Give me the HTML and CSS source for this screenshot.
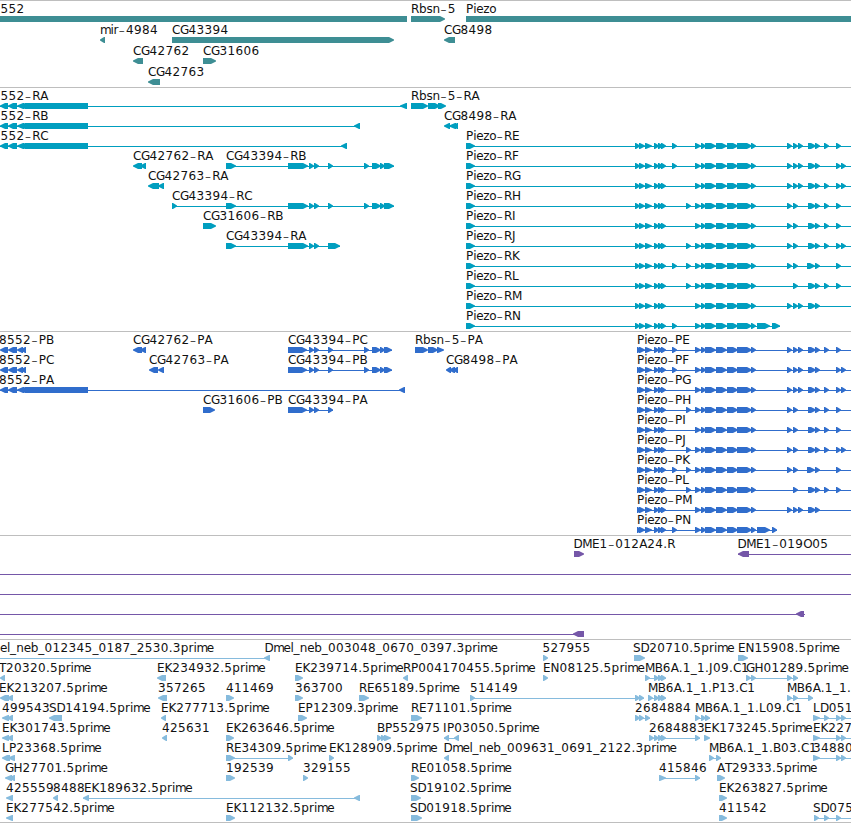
FILE: index.html
```html
<!DOCTYPE html>
<html lang="en">
<head>
<meta charset="utf-8">
<title>Genome tracks</title>
<link rel="stylesheet" href="styles.css">
</head>
<body>
<main class="browser" id="browser"></main>
<script src="tracks.js"></script>
</body>
</html>
```
FILE: styles.css
```css
body {
  margin: 0;
  background: #fff;
}

.browser {
  display: flex;
  flex-direction: column;
  width: 851px;
  height: 823px;
  box-sizing: border-box;
  overflow: hidden;
  border-bottom: 1px solid #bebebe;
}

.track {
  flex: none;
  display: flex;
  flex-direction: column;
  box-sizing: border-box;
  border-top: 1px solid #bebebe;
}

.row {
  display: block;
  flex: none;
  width: 851px;
  height: 20px;
  overflow: visible;
}

.row text {
  font-family: "DejaVu Sans", sans-serif;
  font-size: 12px;
  fill: #111;
  white-space: pre;
}

.row .dash {
  font-family: "DejaVu Sans Light", "DejaVu Sans", sans-serif;
  font-weight: 200;
  font-size: 18px;
}

.genes { height: 87px; color: #3e8e94; }
.genes .row { height: 21px; }
.transcripts { height: 244px; color: #009ebf; }
.proteins { height: 204px; color: #306dcc; }
.clones { height: 104px; color: #7557a8; }
.ests { height: 183px; color: #86bbdd; }

.line, .block { fill: currentColor; }
.line { shape-rendering: crispEdges; }
```
FILE: tracks.js
```js
// Glyph advances for 12px labels.
const ADV = { C: 8, G: 8.5, D: 8.7, R: 8, A: 8, B: 8, E: 7.6, F: 7, H: 9, I: 4, J: 4, K: 7.7, L: 7, M: 9.8, N: 9, P: 7.3, S: 7.6, T: 7, O: 9,
  m: 10.4, i: 3, r: 4.8, p: 7.8, e: 7, l: 3, n: 7.5, b: 7.5, s: 6, z: 6, o: 7, '_': 6.2, '-': 7.7, '.': 4 };

// f(label, labelX, direction, blocks, line)
const f = (label, x, dir, blocks, line) => ({ label, x, dir, blocks, line });
const R = 'r', L = 'l', N = 'n';

const small = xs => xs.map(x => [x, x + 5]);
const coreA = [[645, 652], [654, 659], [658, 663], [661, 666]];
const coreB = [[695, 701], [701, 706], [705, 716], [716, 727], [727, 738], [737, 752], [751, 756]];
const isoforms = {
  E: [672, 787, 793, 798, 808, 815, 824, 836],
  F: [672, 787, 793, 798, 808, 815, 836, 841],
  G: [787, 793, 798, 808, 815, 824, 836, 841],
  H: [686, 787, 793, 808, 815, 824, 836],
  I: [787, 793, 808, 815, 824, 836],
  J: [686, 787, 793, 808, 815, 824, 836, 841],
  K: [672, 686, 787, 793, 807, 815, 836],
  L: [686, 793, 808, 815, 824, 836],
  M: [787, 793, 798, 808, 815],
  N: [672]
};
function piezo(kind, iso) {
  const protein = kind === 'P';
  const start = protein ? 637 : 466;
  const head = protein ? [[637, 641], [639, 645]] : [[466, 475], [635, 640], [639, 645]];
  const extra = isoforms[iso].map(x => [x, x + (x === 808 || x === 807 ? 8 : 5)]);
  let end = 851;
  if (iso === 'N') {
    end = protein ? 777 : 780;
    extra.push([757, 770], [772, end]);
  }
  return f('Piezo-' + kind + iso, start, R, [...head, ...coreA, ...coreB, ...extra], [start, end]);
}

const tail = [[364, 369], [372, 381], [380, 385]];
const left552 = [[0, 8], [8, 17], [17, 24], [20, 88]];
const left855 = [[0, 8], [8, 17], [17, 23], [21, 26]];
const mb = [[654, 659], [658, 663], [661, 666]];

const tracks = [
  ['genes', [
    [f('552', 0.5, N, [[0, 407]]), f('Rbsn-5', 411, R, [[411, 445]]), f('Piezo', 466, N, [[466, 851]])],
    [f('mir-4984', 100, L, [[100, 105]]), f('CG43394', 172, R, [[172, 394]]), f('CG8498', 444, L, [[444, 455]])],
    [f('CG42762', 133, L, [[133, 143]]), f('CG31606', 203, R, [[203, 216]])],
    [f('CG42763', 148, L, [[148, 160]])]
  ]],
  ['transcripts', [
    [f('552-RA', 0.5, L, [...left552, [400, 407]], [0, 407]), f('Rbsn-5-RA', 411, R, [[411, 428], [428, 440], [438, 446]])],
    [f('552-RB', 0.5, L, [...left552, [354, 360]], [0, 360]), f('CG8498-RA', 444, L, [[444, 450], [449, 456], [453, 458]])],
    [f('552-RC', 0.5, L, [...left552, [341, 347]], [0, 347]), piezo('R', 'E')],
    [f('CG42762-RA', 133, L, [[133, 142], [140, 146]]), f('CG43394-RB', 226, R, [[226, 236], [288, 308], ...small([309, 314, 328]), ...tail, [384, 394]], [226, 394]), piezo('R', 'F')],
    [f('CG42763-RA', 148, L, [[148, 159], [158, 164]]), piezo('R', 'G')],
    [f('CG43394-RC', 172, R, [[172, 177], [226, 236], [288, 308], ...small([309, 314, 328]), ...tail, [384, 394]], [172, 394]), piezo('R', 'H')],
    [f('CG31606-RB', 203, R, [[203, 216]]), piezo('R', 'I')],
    [f('CG43394-RA', 226, R, [[226, 236], [288, 308], ...small([309, 314]), [328, 340]], [226, 340]), piezo('R', 'J')],
    [piezo('R', 'K')], [piezo('R', 'L')], [piezo('R', 'M')], [piezo('R', 'N')]
  ]],
  ['proteins', [
    [f('8552-PB', -1, L, left855), f('CG42762-PA', 133, L, [[133, 142], [140, 146]]), f('CG43394-PC', 288, R, [[288, 307], ...small([309, 314, 328]), ...tail, [384, 392]], [288, 392]), f('Rbsn-5-PA', 415, R, [[415, 428], [428, 438], [437, 444]]), piezo('P', 'E')],
    [f('8552-PC', -1, L, left855), f('CG42763-PA', 149, L, [[149, 158], [158, 164]]), f('CG43394-PB', 288, R, [[288, 307], ...small([309, 314, 328]), ...tail, [384, 392]], [288, 392]), f('CG8498-PA', 446, L, [[446, 451], [449, 455], [453, 458]]), piezo('P', 'F')],
    [f('8552-PA', -1, L, [...left552, [399, 405]], [0, 405]), piezo('P', 'G')],
    [f('CG31606-PB', 203, R, [[203, 215]]), f('CG43394-PA', 288, R, [[288, 307], ...small([309, 314, 328])], [288, 333]), piezo('P', 'H')],
    [piezo('P', 'I')], [piezo('P', 'J')], [piezo('P', 'K')], [piezo('P', 'L')], [piezo('P', 'M')], [piezo('P', 'N')]
  ]],
  ['clones', [
    [f('DME1-012A24.R', 573.5, R, [[574, 584]]), f('DME1-019O05', 737.5, L, [[738, 749]], [738, 851])],
    [f('', 0, N, [], [0, 851])],
    [f('', 0, N, [], [0, 851])],
    [f('', 0, L, [[796, 804]], [0, 805])],
    [f('', 0, L, [[573, 584]], [0, 584])]
  ]],
  ['ests', [
    [f('el_neb_012345_0187_2530.3prime', 0, L, [[264, 270]], [0, 270]), f('Dmel_neb_003048_0670_0397.3prime', 264.5, L, []), f('527955', 542.5, R, [[543, 548]]), f('SD20710.5prime', 633, R, [[634, 645]]), f('EN15908.5prime', 738, R, [[738, 748]])],
    [f('T20320.5prime', -1, L, [[0, 5]]), f('EK234932.5prime', 157, L, [[157, 166]]), f('EK239714.5prime', 295, R, [[295, 303]]), f('RP004170455.5prime', 403, L, [[403, 408]]), f('EN08125.5prime', 543, R, [[543, 548]]), f('MB6A.1_1.J09.C1', 645, R, [[645, 650], ...mb], [645, 666]), f('GH01289.5prime', 746, R, small([746, 751, 787, 793]), [746, 798])],
    [f('EK213207.5prime', -1, L, [[0, 9], [7, 13]]), f('357265', 158, L, [[158, 167]]), f('411469', 226, R, [[226, 234]]), f('363700', 295, R, [[295, 303]]), f('RE65189.5prime', 359, R, [[359, 369]]), f('514149', 470, R, small([470, 635, 639]), [470, 644]), f('MB6A.1_1.P13.C1', 648, R, [[648, 653], ...mb], [648, 666]), f('MB6A.1_1.A', 787, R, small([787, 793, 808]), [787, 813])],
    [f('499543', 2, L, [[2, 9], [7, 13]]), f('SD14194.5prime', 49, L, [[49, 62]]), f('EK277713.5prime', 161, L, [[161, 166]]), f('EP12309.3prime', 298, R, [[298, 307]]), f('RE71101.5prime', 411, R, [[411, 422]]), f('2684884', 635, R, small([635, 639, 645]), [635, 650]), f('MB6A.1_1.L09.C1', 695, R, small([695, 701, 705]), [695, 710]), f('LD051', 813, R, [[813, 820], ...small([824, 836, 841])], [813, 851])],
    [f('EK301743.5prime', 2, L, [[2, 9], [7, 13]]), f('425631', 162, L, [[162, 167]]), f('EK263646.5prime', 226, R, [[226, 234]]), f('BP552975', 377, R, [[377, 382], [381, 386], [384, 391]]), f('IP03050.5prime', 443, L, small([444, 454]), [444, 459]), f('2684883', 649, R, [[649, 654], ...mb, [695, 700]], [649, 700]), f('EK173245.5prime', 704, R, [[704, 710]]), f('EK227', 813, R, [[813, 820], ...small([836, 841])], [813, 851])],
    [f('LP23368.5prime', 2, L, [[2, 10], [8, 15]]), f('RE34309.5prime', 226, R, [[226, 235], [288, 293]], [226, 293]), f('EK128909.5prime', 329, R, [[329, 334]]), f('Dmel_neb_009631_0691_2122.3prime', 443.5, L, [[444, 449]]), f('MB6A.1_1.B03.C1', 709, R, small([709, 716]), [709, 721]), f('34880', 813, R, [[813, 820], ...small([836, 841])], [813, 851])],
    [f('GH27701.5prime', 5, L, [[5, 12], [9, 15]]), f('192539', 226, R, [[226, 235]]), f('329155', 303, R, [[303, 308]]), f('RE01058.5prime', 411, R, [[411, 419]]), f('415846', 659, R, [[659, 666], [695, 700]], [659, 700]), f('AT29333.5prime', 717, R, [[717, 725]])],
    [f('425559', 6, L, [[6, 13]]), f('8488', 53, L, [[53, 58]]), f('EK189632.5prime', 84, L, [[83, 89], [354, 360]], [83, 360]), f('SD19102.5prime', 410, R, [[411, 421]]), f('EK263827.5prime', 719, R, [[719, 727]])],
    [f('EK277542.5prime', 6, L, [[6, 13]]), f('EK112132.5prime', 226, R, [[226, 235]]), f('SD01918.5prime', 410, R, [[411, 422]]), f('411542', 719, R, [[719, 727]]), f('SD075', 813, R, small([814, 824, 836]), [814, 851])]
  ]]
];

function block(a, b, dir) {
  const w = b - a;
  const t = w > 7 ? 6 : w;
  let p;
  if (dir === 'n') p = `${a},15 ${b},15 ${b},21 ${a},21`;
  else if (dir === 'r') p = `${a},15 ${b - t + 1},15 ${b},17.5 ${b},18.5 ${b - t + 1},21 ${a},21`;
  else p = `${b},15 ${a + t - 1},15 ${a},17.5 ${a},18.5 ${a + t - 1},21 ${b},21`;
  return `<polygon class="block" points="${p}"/>`;
}

function label(s, x) {
  let out = '', run = '', xs = [];
  const flush = () => {
    if (run) out += `<tspan y="12" x="${xs.join(' ')}">${run}</tspan>`;
    run = '';
    xs = [];
  };
  for (const c of s) {
    if (c === '-') {
      flush();
      out += `<tspan class="dash" y="14" x="${(x + 0.3).toFixed(1)}">-</tspan>`;
    } else {
      run += c;
      xs.push(x.toFixed(1));
    }
    x += ADV[c] || 8;
  }
  flush();
  return `<text>${out}</text>`;
}

document.getElementById('browser').innerHTML = tracks.map(([name, rows]) =>
  `<section class="track ${name}">` + rows.map(row =>
    '<svg class="row">' + row.map(o =>
      (o.line ? `<rect class="line" x="${o.line[0]}" y="18" width="${o.line[1] - o.line[0]}" height="1"/>` : '') +
      o.blocks.map(([a, b]) => block(a, b, o.dir)).join('') +
      (o.label ? label(o.label, o.x) : '')
    ).join('') + '</svg>').join('') + '</section>').join('');
```
